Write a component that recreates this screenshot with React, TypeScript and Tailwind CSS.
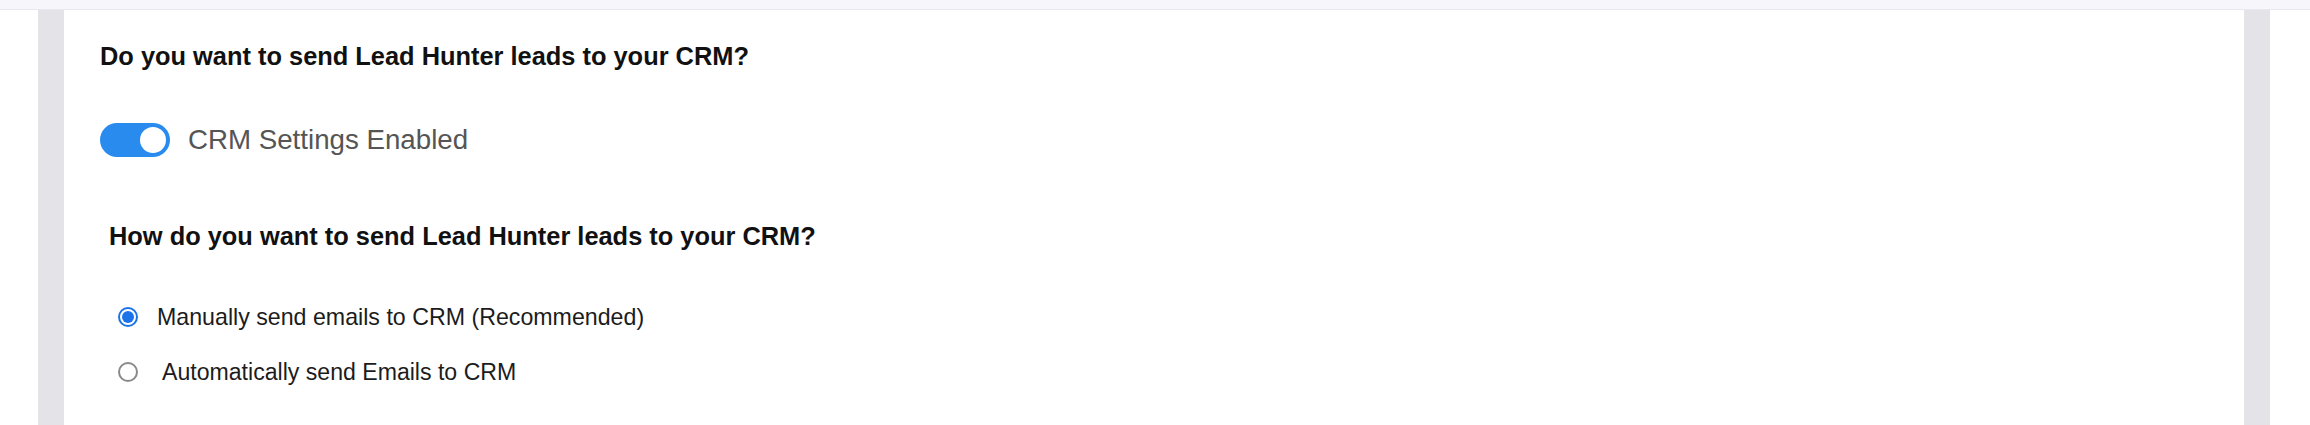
import { useState } from "react";

function Toggle({ on }: { on: boolean }) {
  return (
    <div
      className={`flex h-[34px] w-[70px] items-center rounded-full px-[4px] ${
        on ? "justify-end bg-[#2a8bef]" : "justify-start bg-gray-300"
      }`}
    >
      <div className="h-[26px] w-[26px] rounded-full bg-white" />
    </div>
  );
}

function Radio({ checked }: { checked: boolean }) {
  return checked ? (
    <div className="flex h-[20px] w-[20px] items-center justify-center rounded-full border-2 border-[#1a73e8] bg-white">
      <div className="h-[12px] w-[12px] rounded-full bg-[#1a73e8]" />
    </div>
  ) : (
    <div className="h-[20px] w-[20px] rounded-full border-2 border-[#8a8a8a] bg-white" />
  );
}

export default function App() {
  const [mode] = useState<"manual" | "auto">("manual");

  return (
    <div className="flex h-[425px] w-[2310px] flex-col overflow-hidden bg-white font-['Liberation_Sans',Arial,sans-serif]">
      <div className="h-[10px] border-b border-[#e8e8ee] bg-[#f7f7fb]" />
      <div className="flex flex-1">
        <div className="w-[38px]" />
        <div className="w-[26px] bg-[#e4e4e8]" />
        <div className="flex flex-1 flex-col pt-[28px]">
          <div className="flex h-[36px] items-center pl-[36px]">
            <h2 className="text-[25.4px] font-bold text-[#111]">
              Do you want to send Lead Hunter leads to your CRM?
            </h2>
          </div>

          <div className="mt-[46px] flex h-[40px] items-center gap-[18px] pl-[36px]">
            <Toggle on />
            <span className="text-[27.7px] text-[#555]">CRM Settings Enabled</span>
          </div>

          <div className="mt-[58px] flex h-[36px] items-center pl-[45px]">
            <h3 className="text-[25.4px] font-bold text-[#111]">
              How do you want to send Lead Hunter leads to your CRM?
            </h3>
          </div>

          <div className="mt-[47px] flex h-[32px] items-center gap-[19px] pl-[54px]">
            <Radio checked={mode === "manual"} />
            <span className="text-[23.2px] text-[#1c1c1c]">
              Manually send emails to CRM (Recommended)
            </span>
          </div>

          <div className="mt-[23px] flex h-[32px] items-center gap-[24px] pl-[54px]">
            <Radio checked={mode === "auto"} />
            <span className="text-[23.1px] text-[#1c1c1c]">Automatically send Emails to CRM</span>
          </div>
        </div>
        <div className="w-[26px] bg-[#e4e4e8]" />
        <div className="w-[40px]" />
      </div>
    </div>
  );
}
